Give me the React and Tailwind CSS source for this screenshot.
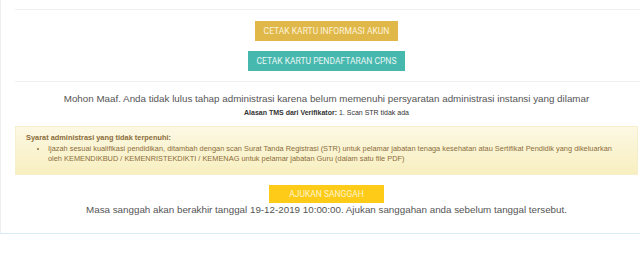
export default function App() {
  return (
    <div className="w-[640px] h-[265px] bg-white overflow-hidden" style={{ fontFamily: '"Liberation Sans", Arial, sans-serif' }}>
      <div className="border-l border-[#eeeeee] border-b border-b-[#d6ecf8] h-[234px] pl-[14px] pt-[9px]">
        <div className="border-t border-[#f0f0f0]" />
        <div className="flex flex-col items-center gap-[10px] pt-[11px] pb-[10px] pr-[2px]" style={{ fontFamily: 'Roboto, sans-serif' }}>
          <button className="bg-[#e0b84a] text-[#fdf3d8] text-[8.5px] h-[20px] px-[9px] leading-none">
            CETAK KARTU INFORMASI AKUN
          </button>
          <button className="bg-[#47b8ae] text-[#e8f7f5] text-[8.5px] h-[20px] px-[9px] leading-none">
            CETAK KARTU PENDAFTARAN CPNS
          </button>
        </div>
        <div className="border-t border-[#f0f0f0]" />
        <div className="text-center pr-[2px]">
          <p className="text-[9.8px] text-[#555] mt-[10px] leading-[13px]">
            Mohon Maaf. Anda tidak lulus tahap administrasi karena belum memenuhi persyaratan administrasi instansi yang dilamar
          </p>
          <p className="text-[7px] text-[#333] mt-[3px] leading-[10px]">
            <span className="font-bold">Alasan TMS dari Verifikator:</span> 1. Scan STR tidak ada
          </p>
        </div>
        <div className="mt-[8px] mr-[2px] bg-gradient-to-b from-[#fcf8e3] to-[#f8efc0] border border-[#f7efcc] h-[49px] pl-[10px] pr-[18px] pt-[6px] text-[7.4px] leading-[10.5px] text-[#8a6d3b]">
          <p className="font-bold">Syarat administrasi yang tidak terpenuhi:</p>
          <ul className="list-disc pl-[22px]">
            <li>
              Ijazah sesuai kualifikasi pendidikan, ditambah dengan scan Surat Tanda Registrasi (STR) untuk pelamar jabatan tenaga kesehatan atau Sertifikat Pendidik yang dikeluarkan oleh KEMENDIKBUD / KEMENRISTEKDIKTI / KEMENAG untuk pelamar jabatan Guru (dalam satu file PDF)
            </li>
          </ul>
        </div>
        <div className="flex flex-col items-center mt-[10px] pr-[2px]">
          <button className="bg-[#fdcb18] text-[#fff4cc] text-[8.5px] h-[18px] px-[20px] leading-none" style={{ fontFamily: 'Roboto, sans-serif' }}>
            AJUKAN SANGGAH
          </button>
          <p className="text-[9.8px] text-[#555] leading-[13px]">
            Masa sanggah akan berakhir tanggal 19-12-2019 10:00:00. Ajukan sanggahan anda sebelum tanggal tersebut.
          </p>
        </div>
      </div>
    </div>
  );
}
